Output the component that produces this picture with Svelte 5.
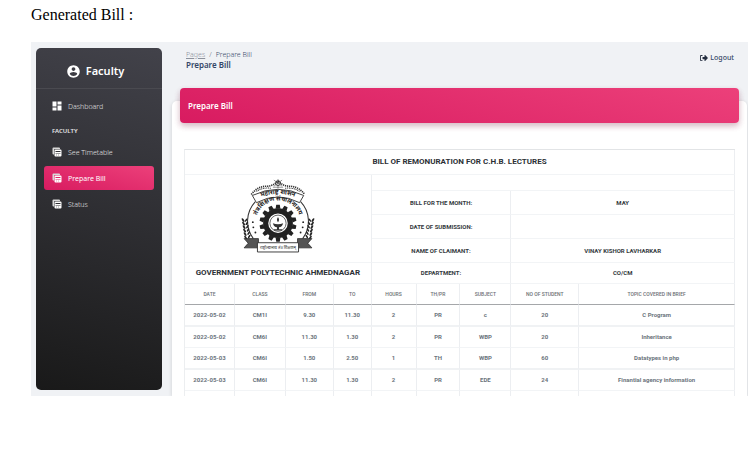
<script>
  const nav = [
    { label: 'See Timetable', active: false },
    { label: 'Prepare Bill', active: true },
    { label: 'Status', active: false },
  ];
  const widths = [50, 51, 48, 38, 45, 44, 51, 68, 156];
  const total = widths.reduce((a, b) => a + b, 0);
  const heads = ['DATE', 'CLASS', 'FROM', 'TO', 'HOURS', 'TH/PR', 'SUBJECT', 'NO OF STUDENT', 'TOPIC COVERED IN BRIEF'];
  const rows = [
    ['2022-05-02', 'CM1I', '9.30', '11.30', '2', 'PR', 'c', '20', 'C Program'],
    ['2022-05-02', 'CM6I', '11.30', '1.30', '2', 'PR', 'WBP', '20', 'Inheritance'],
    ['2022-05-03', 'CM6I', '1.50', '2.50', '1', 'TH', 'WBP', '60', 'Datatypes in php'],
    ['2022-05-03', 'CM6I', '11.30', '1.30', '2', 'PR', 'EDE', '24', 'Finantial agency information'],
  ];
  const teeth = Array.from({ length: 14 }, (_, i) => (i * 360) / 14);
  const leaves = [0, 1, 2, 3, 4, 5];
</script>

<main>
  <h1>Generated Bill :</h1>
  <div class="frame">
    <aside>
      <div class="brand">
        <svg viewBox="0 0 24 24" width="15" height="15" aria-hidden="true"><path fill="#fff" d="M12 2C6.48 2 2 6.48 2 12s4.48 10 10 10 10-4.48 10-10S17.52 2 12 2zm0 3c1.66 0 3 1.34 3 3s-1.34 3-3 3-3-1.34-3-3 1.34-3 3-3zm0 14.200c-2.5 0-4.710-1.280-6-3.220.03-1.990 4-3.080 6-3.080 1.990 0 5.970 1.090 6 3.080-1.290 1.940-3.500 3.220-6 3.220z"/></svg>
        <span>Faculty</span>
      </div>
      <nav>
        <a href="#dashboard">
          <svg viewBox="0 0 24 24" width="12" height="12" aria-hidden="true"><path fill="#fff" d="M3 13h8V3H3v10zm0 8h8v-6H3v6zm10 0h8V11h-8v10zm0-18v6h8V3h-8z"/></svg>
          Dashboard
        </a>
        <h2>FACULTY</h2>
        {#each nav as item}
          <a href="#{item.label}" class:active={item.active}>
            <svg viewBox="0 0 24 24" width="12" height="12" aria-hidden="true">
              <path fill="#d8d8d8" d="M5 3h11a2 2 0 0 1 2 2v1H8a2 2 0 0 0-2 2v9H5a2 2 0 0 1-2-2V5a2 2 0 0 1 2-2z"/>
              <path fill="#fff" fill-rule="evenodd" d="M9 7h10a2 2 0 0 1 2 2v10a2 2 0 0 1-2 2H9a2 2 0 0 1-2-2V9a2 2 0 0 1 2-2zM9 10v2h10v-2zM9 14v1h10v-1zM11 17v2h1v-2zM15 17v2h1v-2z"/>
            </svg>
            {item.label}
          </a>
        {/each}
      </nav>
    </aside>

    <section class="content">
      <header>
        <div>
          <div class="crumbs"><a href="#pages">Pages</a><i>/</i><span>Prepare Bill</span></div>
          <h3>Prepare Bill</h3>
        </div>
        <a class="logout" href="#logout">
          <svg viewBox="0 0 512 512" width="8" height="8" aria-hidden="true"><path fill="#252f40" d="M160 448H80c-44 0-80-36-80-80V144c0-44 36-80 80-80h80v56H80c-13 0-24 11-24 24v224c0 13 11 24 24 24h80zM497 273 329 441c-15 15-41 4-41-17v-96H184c-13 0-24-11-24-24v-96c0-13 11-24 24-24h104V88c0-21 26-32 41-17l168 168c9 9 9 25 0 34z"/></svg>
          Logout
        </a>
      </header>

      <div class="card">
        <h4>Prepare Bill</h4>
        <table>
          <colgroup>
            {#each widths as w}<col style="width: {(w / total) * 100}%" />{/each}
          </colgroup>
          <tbody class="summary">
            <tr><th colspan="9" class="title">BILL OF REMONURATION FOR C.H.B. LECTURES</th></tr>
            <tr class="blank">
              <td colspan="4" rowspan="4" class="emblem">
                <svg viewBox="0 0 72 73" width="74" height="75" role="img" aria-label="Emblem">
                  <defs>
                    <path id="arc-top" d="M13 21Q36 10 59 21" />
                    <path id="arc-mid" d="M16 53A22 22 0 1 1 56 53" />
                  </defs>
                  <g fill="none" stroke="#333">
                    <path d="M14 23A28 28 0 0 0 12 59M58 23A28 28 0 0 1 60 59" stroke-width="1" />
                    <path d="M10 16Q16 8 25 8Q31 8 36 3Q41 8 47 8Q56 8 62 16" stroke-width="1.600" stroke-dasharray="1.200 .8" />
                    <path d="M15 13Q21 9 29 10M43 10Q51 9 57 13" stroke-width="1" stroke-dasharray="1 .7" />
                    <circle cx="36" cy="5" r="2.400" stroke-width=".8" />
                    <path d="M31 9h10M36 1v9M32 2l8 6M40 2l-8 6" stroke-width=".5" />
                  </g>
                  <path d="M11 17Q36 5 61 17L57 24Q36 13 15 24Z" fill="#fff" stroke="#333" stroke-width=".9" />
                  <g fill="#222">
                    {#each teeth as a}
                      <path d="M33.600 30L34.300 26h3.400L38.400 30z" transform="rotate({a} 36 44)" />
                    {/each}
                  </g>
                  <circle cx="36" cy="44" r="12" fill="none" stroke="#222" stroke-width="5" />
                  <circle cx="36" cy="44" r="7.900" fill="#fff" stroke="#444" stroke-width=".8" />
                  <path d="M31 44q5 2 10 0q-1 4-4 4v2h3v1h-8v-1h3v-2q-3 0-4-4zM36 38q2 3 0 5q-2-2 0-5z" fill="#333" />
                  <g fill="#222">
                    {#each leaves as n}
                      <ellipse cx={2 + n * 0.5} cy={41 + n * 3.4} rx=".9" ry="2.100" transform="rotate(-35 {2 + n * 0.5} {41 + n * 3.4})" />
                      <ellipse cx={5 + n * 0.6} cy={41 + n * 3.2} rx=".8" ry="1.900" transform="rotate(35 {5 + n * 0.6} {41 + n * 3.2})" />
                      <ellipse cx={70 - n * 0.5} cy={41 + n * 3.4} rx=".9" ry="2.100" transform="rotate(35 {70 - n * 0.5} {41 + n * 3.4})" />
                      <ellipse cx={67 - n * 0.6} cy={41 + n * 3.2} rx=".8" ry="1.900" transform="rotate(-35 {67 - n * 0.6} {41 + n * 3.2})" />
                    {/each}
                    <circle cx="11.500" cy="43" r=".9" /><circle cx="12" cy="48" r=".9" /><circle cx="14" cy="53" r=".9" />
                    <circle cx="60.500" cy="43" r=".9" /><circle cx="60" cy="48" r=".9" /><circle cx="58" cy="53" r=".9" />
                  </g>
                  <path d="M3 59H17V68H3L7 63.500ZM69 59H55V68H69L65 63.500Z" fill="#555" stroke="#222" stroke-width=".7" />
                  <path d="M16 63h40v9H16z" fill="#fff" stroke="#333" stroke-width=".9" />
                  <g fill="#222" font-weight="700">
                    <text font-size="6"><textPath href="#arc-top" startOffset="50%" text-anchor="middle">महाराष्ट्र शासन</textPath></text>
                    <text font-size="6"><textPath href="#arc-mid" startOffset="50%" text-anchor="middle">तंत्रशिक्षण संचालनालय</textPath></text>
                    <text x="36" y="69" font-size="4" font-weight="400" text-anchor="middle">राष्ट्रोत्थानाय तंत्र शिक्षणम्</text>
                  </g>
                </svg>
              </td>
              <td colspan="5"></td>
            </tr>
            <tr><th colspan="3">BILL FOR THE MONTH:</th><th colspan="2">MAY</th></tr>
            <tr><th colspan="3">DATE OF SUBMISSION:</th><th colspan="2"></th></tr>
            <tr><th colspan="3">NAME OF CLAIMANT:</th><th colspan="2">VINAY KISHOR LAVHARKAR</th></tr>
            <tr class="dept"><th colspan="4" class="title">GOVERNMENT POLYTECHNIC AHMEDNAGAR</th><th colspan="3">DEPARTMENT:</th><th colspan="2">CO/CM</th></tr>
            <tr class="heads">{#each heads as h}<th>{h}</th>{/each}</tr>
          </tbody>
          <tbody class="lectures">
            {#each rows as row}
              <tr>{#each row as cell}<td>{cell}</td>{/each}</tr>
            {/each}
            <tr class="next">{#each heads as _}<td></td>{/each}</tr>
          </tbody>
        </table>
      </div>
    </section>
  </div>
</main>

<style>
  :global(body) { margin: 0; background: #fff; }
  main { padding-left: 31px; font-family: "Noto Sans", "Open Sans", sans-serif; }
  h1, h2, h3, h4 { margin: 0; }
  h1 {
    height: 36px; padding-top: 6px;
    font: 400 16px/18px "Liberation Serif", serif; color: #000;
  }
  a { text-decoration: none; }
  .frame { display: flex; background: #f0f2f5; overflow: hidden; }
  aside {
    flex: none; width: 126px; box-sizing: border-box; margin: 6px 10px 6px 5px;
    border-radius: 5px; background: linear-gradient(195deg, #42424a, #191919); color: #fff;
  }
  .brand {
    display: flex; align-items: center; justify-content: center; gap: 5px;
    height: 41px; padding: 6px 8px 0 0; box-sizing: border-box; border-bottom: 1px solid #4a4a50;
    font-size: 11px; font-weight: 600; line-height: 16px;
  }
  nav { display: flex; flex-direction: column; gap: 2px; padding: 5px 8px 0; }
  nav a {
    display: flex; align-items: center; gap: 5px; height: 24px; padding-left: 7px;
    border-radius: 3px; color: #e4e4e6; font-size: 7px; font-weight: 300;
  }
  nav a.active { background: linear-gradient(195deg, #ec407a, #d81b60); color: #fff; font-weight: 400; }
  h2 { padding: 4px 0 0 8px; font-size: 6px; line-height: 14px; font-weight: 600; color: #e4e4e6; }
  .content { flex: 1; min-width: 0; }
  header {
    display: flex; justify-content: space-between; align-items: flex-start;
    height: 51px; padding: 8px 14px 0; box-sizing: border-box;
  }
  .crumbs { display: flex; gap: 4px; font-size: 7px; line-height: 9px; font-weight: 300; color: #344767; }
  .crumbs a { color: #8b919c; text-decoration: underline; }
  .crumbs i { font-style: normal; color: #6c757d; }
  h3 { font-size: 8px; line-height: 11px; font-weight: 600; color: #344767; }
  .logout {
    display: flex; align-items: center; gap: 2px; margin-top: 3px;
    font-size: 7px; line-height: 10px; font-weight: 500; color: #344767;
  }
  .card {
    margin: 8px 1px 0 0; padding: 0 12px; background: #fff; border-radius: 5px 5px 0 0;
    box-shadow: 0 1px 4px rgba(0, 0, 0, .14);
  }
  h4 {
    position: relative; top: -13px; margin: 0 -4px; padding: 0 8px; border-radius: 4px;
    background: linear-gradient(195deg, #ec407a, #d81b60); color: #fff;
    font-size: 8px; line-height: 35px; font-weight: 600;
    box-shadow: 0 3px 6px rgba(0, 0, 0, .16), 0 3px 6px rgba(233, 30, 99, .16);
  }
  table {
    width: 100%; margin-top: 13px; table-layout: fixed; border-collapse: separate; border-spacing: 0;
    border-top: 1px solid #e2e4e6; border-left: 1px solid #eceef0;
    font-family: Roboto, sans-serif; text-align: center;
  }
  th, td {
    padding: 0; border-right: 1px solid #eceef1; border-bottom: 1px solid #f2f4f6;
    font-size: 6px; line-height: 8px; vertical-align: middle; white-space: nowrap;
  }
  .summary tr { height: 24px; }
  .summary th { font-weight: 700; color: #343a40; }
  .summary .blank { height: 16px; }
  .summary .title { height: 24px; font-size: 8px; line-height: 10px; color: #2c3136; }
  .summary .dept .title, .summary .dept { height: 20px; }
  .summary .emblem { padding-bottom: 6px; }
  .emblem svg { display: block; margin: 0 auto; font-family: "Noto Sans Devanagari", "Noto Sans", sans-serif; }
  .summary .heads { height: 21px; }
  .summary .heads th { font-size: 5px; font-weight: 500; color: #6c7075; border-bottom: 1px solid #a5a7aa; }
  .lectures td { height: 20px; font-weight: 700; color: #6c757d; }
  .lectures tr:nth-child(odd) td { border-bottom: 2px solid #f0f2f4; }
  .lectures tr.next:last-child td { height: 5px; border-bottom: 0; }
</style>
